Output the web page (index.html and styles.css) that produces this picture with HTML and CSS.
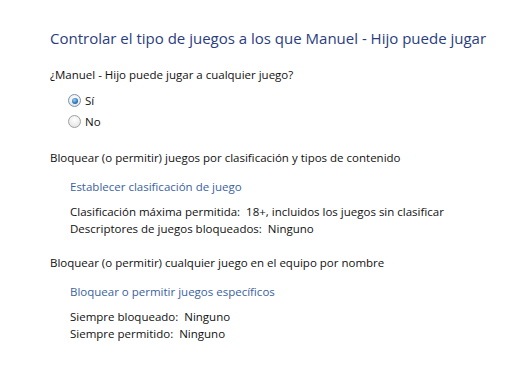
FILE: index.html
```html
<!DOCTYPE html>
<html lang="es">
<head>
<meta charset="utf-8">
<link rel="stylesheet" href="styles.css">
</head>
<body>
<main class="page">
  <h1 class="title">Controlar el tipo de juegos a los que Manuel - Hijo puede jugar</h1>
  <p class="question">¿Manuel - Hijo puede jugar a cualquier juego?</p>
  <div class="radios">
    <div class="radio-row"><span class="radio checked"></span><span>Sí</span></div>
    <div class="radio-row"><span class="radio"></span><span>No</span></div>
  </div>
  <section class="section">
    <p class="section-head">Bloquear (o permitir) juegos por clasificación y tipos de contenido</p>
    <div class="sub">
      <a class="link">Establecer clasificación de juego</a>
      <div class="details">
        <p>Clasificación máxima permitida:&nbsp; 18+, incluidos los juegos sin clasificar</p>
        <p>Descriptores de juegos bloqueados:&nbsp; Ninguno</p>
      </div>
    </div>
  </section>
  <section class="section">
    <p class="section-head">Bloquear (o permitir) cualquier juego en el equipo por nombre</p>
    <div class="sub">
      <a class="link">Bloquear o permitir juegos específicos</a>
      <div class="details">
        <p>Siempre bloqueado:&nbsp; Ninguno</p>
        <p>Siempre permitido:&nbsp; Ninguno</p>
      </div>
    </div>
  </section>
</main>
</body>
</html>
```
FILE: styles.css
```css
html, body {
  margin: 0;
  padding: 0;
  background: #ffffff;
}
body {
  font-family: "Open Sans", "Noto Sans", sans-serif;
  font-size: 11.5px;
  color: #111111;
}
p { margin: 0; }
.page {
  padding: 28px 0 0 50px;
}
.title {
  margin: 0;
  font-weight: normal;
  font-size: 15px;
  line-height: 20px;
  color: #2a3d80;
}
.question {
  margin-top: 18px;
  line-height: 17px;
}
.radios {
  margin-top: 7px;
  padding-left: 18px;
}
.radio-row {
  display: flex;
  align-items: center;
  gap: 4px;
  height: 21px;
  line-height: 17px;
}
.radio {
  width: 11px;
  height: 11px;
  border-radius: 50%;
  border: 1px solid #a0a0a0;
  background: radial-gradient(circle at 50% 35%, #ffffff 0%, #ececec 60%, #d6d6d6 100%);
  box-sizing: content-box;
  position: relative;
}
.radio.checked {
  border-color: #7a93ad;
}
.radio.checked::after {
  content: "";
  position: absolute;
  left: 2.5px;
  top: 2.5px;
  width: 6px;
  height: 6px;
  border-radius: 50%;
  background: radial-gradient(circle at 40% 35%, #9fd0f5 0%, #2a7cc4 55%, #104e8a 100%);
}
.section {
  margin-top: 17px;
}
.section-head {
  line-height: 17px;
}
.sub {
  padding-left: 20px;
  margin-top: 12px;
}
.link {
  display: block;
  line-height: 17px;
  color: #3a62a0;
}
.details {
  margin-top: 8px;
  line-height: 17px;
}
```
